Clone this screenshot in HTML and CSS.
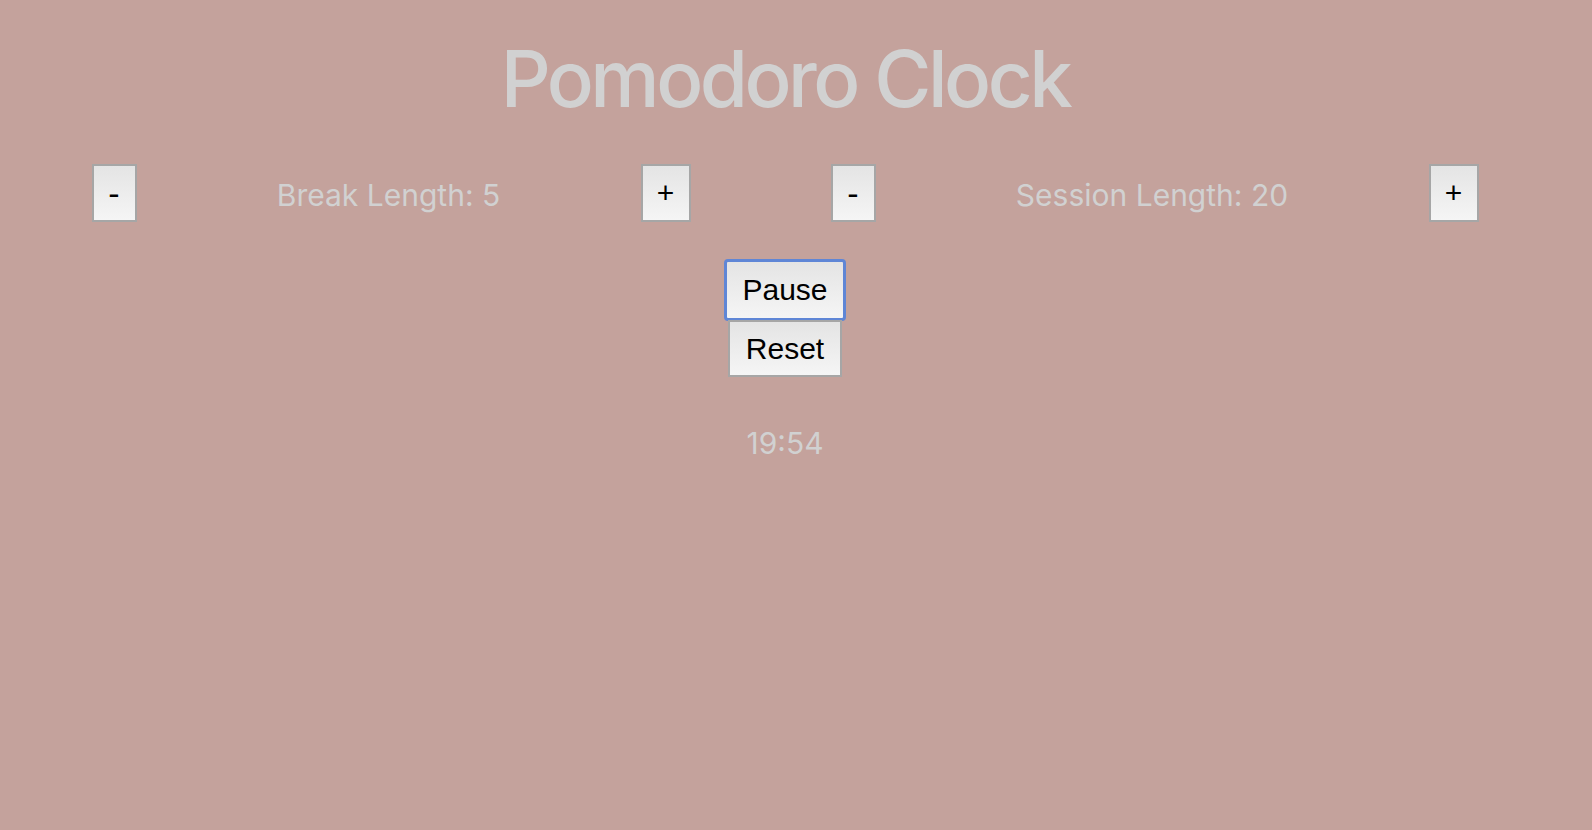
FILE: index.html
```html
<!DOCTYPE html>
<html lang="en">
<head>
<meta charset="utf-8">
<title>Pomodoro Clock</title>
<link rel="stylesheet" href="styles.css">
</head>
<body>
<main class="app">
  <h1 class="title">Pomodoro Clock</h1>
  <section class="controls">
    <button class="adj adj-minus">-</button>
    <span class="label label-break">Break Length: 5</span>
    <button class="adj adj-plus">+</button>
    <button class="adj adj-minus">-</button>
    <span class="label label-session">Session Length: 20</span>
    <button class="adj adj-plus">+</button>
  </section>
  <section class="actions">
    <button class="action action-focus">Pause</button>
    <button class="action action-reset">Reset</button>
  </section>
  <div class="timer">19:54</div>
</main>
</body>
</html>
```

FILE: styles.css
```css
html, body {
  margin: 0;
  padding: 0;
  background: #c4a29c;
}

body {
  width: 1592px;
  height: 830px;
  overflow: hidden;
}

.app {
  width: 1570px;
  display: flex;
  flex-direction: column;
  align-items: center;
}

.title {
  margin: 0;
  padding-top: 39px;
  font-family: Inter, "Liberation Sans", Arial, sans-serif;
  font-weight: 500;
  font-size: 78px;
  line-height: 80px;
  letter-spacing: -3.5px;
  color: #d1d1d1;
}

.controls {
  margin-top: 45px;
  display: flex;
  align-items: center;
  justify-content: center;
  gap: 140px;
  width: 100%;
}

.adj {
  box-sizing: border-box;
  height: 58px;
  margin: 0;
  padding: 0;
  border: 2px solid #a6a6a6;
  border-radius: 0;
  background: linear-gradient(#e4e4e4, #f5f5f5);
  color: #000;
  font-family: "Liberation Sans", Arial, sans-serif;
  font-size: 30px;
  line-height: 1;
}

.adj-minus {
  width: 45px;
  font-size: 34px;
}

.adj-plus {
  width: 50px;
}

.label {
  padding-top: 3px;
  font-family: Inter, Roboto, "Noto Sans", sans-serif;
  font-size: 30px;
  color: #d1d1d1;
  white-space: nowrap;
  text-align: center;
}

.label-break {
  width: 224px;
}

.label-session {
  width: 273px;
}

.actions {
  margin-top: 37px;
  display: flex;
  flex-direction: column;
  align-items: center;
}

.action {
  box-sizing: border-box;
  margin: 0;
  padding: 0 16px;
  border: 2px solid #a6a6a6;
  border-radius: 0;
  background: linear-gradient(#e4e4e4, #f5f5f5);
  color: #000;
  font-family: "Liberation Sans", Arial, sans-serif;
  font-size: 30px;
  line-height: 1;
}

.action-focus {
  height: 62px;
  border: 3px solid #5f86d6;
  border-radius: 4px;
  padding: 0 15px;
}

.action-reset {
  height: 57px;
  margin-top: -1px;
}

.timer {
  margin-top: 48px;
  font-family: Inter, Roboto, "Noto Sans", sans-serif;
  font-size: 30px;
  line-height: 36px;
  color: #d1d1d1;
}
```
